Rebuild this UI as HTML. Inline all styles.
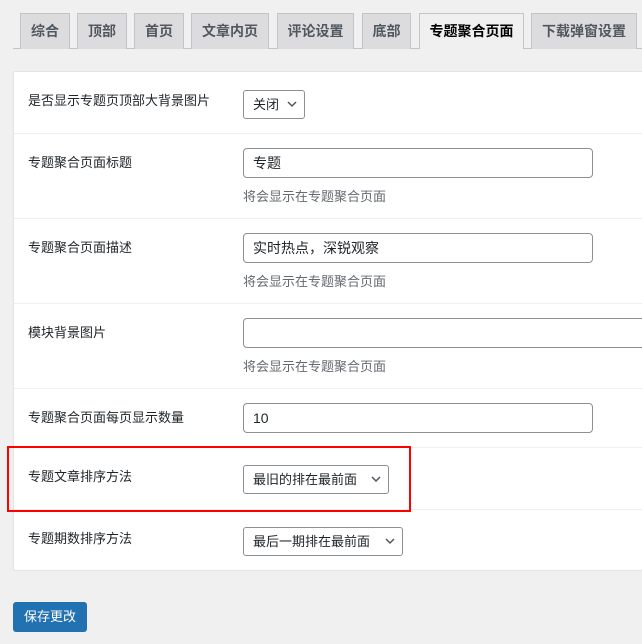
<!DOCTYPE html>
<html><head><meta charset="utf-8"><style>
*{box-sizing:border-box;margin:0;padding:0}
body{width:642px;height:644px;background:#f0f0f1;font-family:"Liberation Sans","Noto Sans CJK SC",sans-serif;font-size:13px;color:#1d2327;position:relative;overflow:hidden}
.a{position:absolute}
.tab{position:absolute;top:13px;height:36px;background:#dcdcde;border:1px solid #c3c4c7;border-bottom:none;font-size:14px;font-weight:600;color:#50575e;text-align:center;line-height:34px}
.tab.on{background:#f0f0f1;color:#000;height:36px}
.line{position:absolute;left:13px;right:0;top:48px;height:1px;background:#c3c4c7}
.panel{position:absolute;left:13px;top:71px;width:640px;height:500px;background:#fff;border:1px solid #e2e4e7}
.hr{position:absolute;left:14px;right:0;height:1px;background:#f0f0f1}
.lab{position:absolute;left:28px;font-size:13px}
.inp{position:absolute;left:243px;width:350px;height:30px;border:1px solid #8c8f94;border-radius:4px;padding-left:9px;line-height:28px;font-size:14px}
.sel{position:absolute;left:243px;height:29px;border:1px solid #8c8f94;border-radius:3px;padding-left:9px;line-height:27px;font-size:13px}
.sel svg{position:absolute;right:7px;top:10px}
.desc{position:absolute;left:243px;color:#646970;font-size:13px}
</style></head><body>
<div class="line"></div>
<div class="tab" style="left:20px;width:50px">综合</div>
<div class="tab" style="left:77px;width:50px">顶部</div>
<div class="tab" style="left:134px;width:50px">首页</div>
<div class="tab" style="left:191px;width:78px">文章内页</div>
<div class="tab" style="left:277px;width:77px">评论设置</div>
<div class="tab" style="left:362px;width:49px">底部</div>
<div class="tab on" style="left:419px;width:105px">专题聚合页面</div>
<div class="tab" style="left:531px;width:106px">下载弹窗设置</div>
<div class="panel"></div>
<div class="hr" style="top:133px"></div>
<div class="hr" style="top:218px"></div>
<div class="hr" style="top:303px"></div>
<div class="hr" style="top:388px"></div>
<div class="hr" style="top:447px"></div>
<div class="hr" style="top:509px"></div>

<div class="lab" style="top:90px">是否显示专题页顶部大背景图片</div>
<div class="sel" style="top:90px;width:62px">关闭<svg width="10" height="7" viewBox="0 0 10 7"><path d="M1 1l4 4 4-4" fill="none" stroke="#50575e" stroke-width="1.5"/></svg></div>

<div class="lab" style="top:152px">专题聚合页面标题</div>
<div class="inp" style="top:148px">专题</div>
<div class="desc" style="top:186px">将会显示在专题聚合页面</div>

<div class="lab" style="top:237px">专题聚合页面描述</div>
<div class="inp" style="top:233px">实时热点，深锐观察</div>
<div class="desc" style="top:271px">将会显示在专题聚合页面</div>

<div class="lab" style="top:322px">模块背景图片</div>
<div class="inp" style="top:318px;width:420px"></div>
<div class="desc" style="top:356px">将会显示在专题聚合页面</div>

<div class="lab" style="top:407px">专题聚合页面每页显示数量</div>
<div class="inp" style="top:403px">10</div>

<div class="lab" style="top:466px">专题文章排序方法</div>
<div class="sel" style="top:465px;width:146px">最旧的排在最前面<svg width="10" height="7" viewBox="0 0 10 7"><path d="M1 1l4 4 4-4" fill="none" stroke="#50575e" stroke-width="1.5"/></svg></div>
<div class="a" style="left:7px;top:446px;width:404px;height:66px;border:2px solid #f00"></div>

<div class="lab" style="top:528px">专题期数排序方法</div>
<div class="sel" style="top:527px;width:160px">最后一期排在最前面<svg width="10" height="7" viewBox="0 0 10 7"><path d="M1 1l4 4 4-4" fill="none" stroke="#50575e" stroke-width="1.5"/></svg></div>

<div class="a" style="left:13px;top:602px;width:74px;height:30px;background:#2271b1;border-radius:3px;color:#fff;font-size:13px;line-height:30px;text-align:center">保存更改</div>
</body></html>
